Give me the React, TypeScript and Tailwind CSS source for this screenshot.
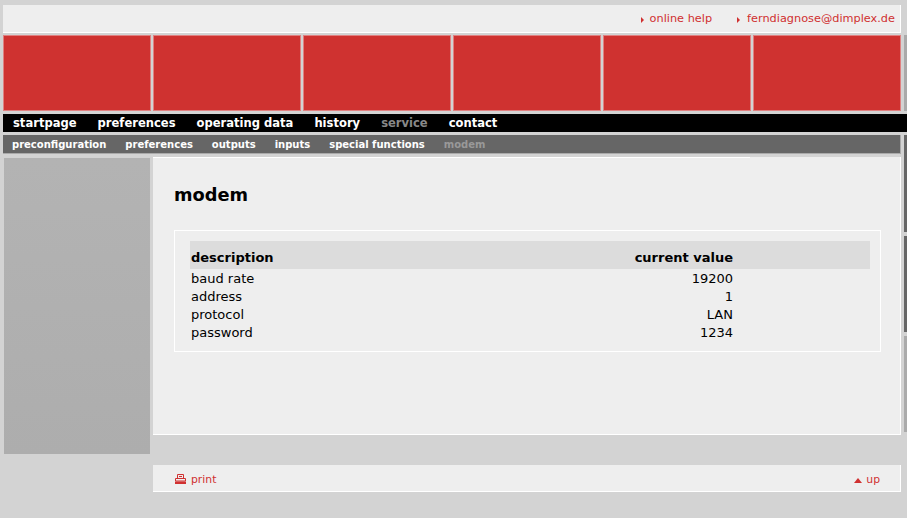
const tiles = [1, 2, 3, 4, 5, 6];

const mainNav = [
  { label: 'startpage' },
  { label: 'preferences' },
  { label: 'operating data' },
  { label: 'history' },
  { label: 'service', muted: true },
  { label: 'contact' },
];

const subNav = [
  { label: 'preconfiguration' },
  { label: 'preferences' },
  { label: 'outputs' },
  { label: 'inputs' },
  { label: 'special functions' },
  { label: 'modem', muted: true },
];

const rows = [
  ['baud rate', '19200'],
  ['address', '1'],
  ['protocol', 'LAN'],
  ['password', '1234'],
];

function ArrowRight({ gap }: { gap: string }) {
  return (
    <svg width="3" height="6" viewBox="0 0 3 6" className={gap}>
      <path d="M0 0 L3 3 L0 6 Z" fill="#d03030" />
    </svg>
  );
}

function PrintIcon() {
  return (
    <svg width="11" height="10" viewBox="0 0 11 10" className="mr-[5px] mb-[2px]">
      <path d="M2.5 4 V0.5 H8.5 V4 M4 2.5 H7" fill="none" stroke="#d03030" />
      <path d="M0.5 4.5 H10.5 V7 H0.5 Z" fill="none" stroke="#d03030" />
      <rect x="0" y="7.5" width="11" height="2.5" fill="#d03030" />
    </svg>
  );
}

export default function App() {
  return (
    <div className="h-[518px] w-[907px] overflow-hidden bg-[#d3d3d3] pl-[3px] pt-[5px] font-['DejaVu_Sans',sans-serif] text-[13px] text-black">
      {/* Top links */}
      <div className="flex h-[28px] w-[898px] items-center justify-end border-b border-r border-white bg-[#eeeeee] pr-[5px] pt-[2px] text-[11.3px] text-[#d03030]">
        <a className="flex items-center">
          <ArrowRight gap="mr-[6px]" />
          online help
        </a>
        <a className="ml-[25px] flex items-center">
          <ArrowRight gap="mr-[7px]" />
          ferndiagnose@dimplex.de
        </a>
      </div>

      {/* Red tiles */}
      <div className="mt-[2px] flex gap-[2px]">
        {tiles.map((t) => (
          <div key={t} className="h-[76px] w-[148px] shrink-0 border border-[#e08080] bg-[#cf3230]" />
        ))}
        <div className="ml-px h-[76px] w-[148px] shrink-0 bg-[#aaaaaa]" />
      </div>

      {/* Main nav */}
      <div className="mt-[3px] flex h-[18px] w-[904px] items-center bg-black pl-[10px] pt-[2px] text-[11.55px] font-bold text-white">
        {mainNav.map((item) => (
          <a key={item.label} className={`mr-[21px] ${item.muted ? 'text-[#888888]' : ''}`}>
            {item.label}
          </a>
        ))}
      </div>

      <div className="mt-[3px] flex">
        <div className="w-[898px] shrink-0">
          {/* Sub nav */}
          <div className="flex h-[19px] items-center border-b border-r border-[#aaaaaa] bg-[#666666] pl-[9px] pt-[1px] text-[10px] font-bold text-white">
            {subNav.map((item) => (
              <a key={item.label} className={`mr-[19px] ${item.muted ? 'text-[#999999]' : ''}`}>
                {item.label}
              </a>
            ))}
          </div>

          <div className="mt-[3px] flex">
            {/* Side column */}
            <div className="ml-px mt-px h-[296px] w-[146px] bg-gradient-to-b from-[#b3b3b3] to-[#adadad]" />

            <div className="ml-[3px] w-[748px]">
              {/* Content */}
              <div className="h-[278px] border-b border-r border-white bg-[#eeeeee] pr-[19px]">
                <div className="h-px w-[597px] bg-white" />
                <div className="pl-[21px] pt-[25px]">
                  <h1 className="text-[17.8px] font-bold leading-[24px]">modem</h1>
                  <div className="mt-[23px] h-[122px] border border-white pl-[15px] pr-[10px] pt-[10px]">
                    <table className="w-full table-fixed border-collapse">
                      <thead>
                        <tr className="h-[28px] bg-[#dcdcdc] font-bold">
                          <th className="w-[443px] pl-px pt-[6px] text-left">description</th>
                          <th className="w-[100px] whitespace-nowrap pt-[6px] text-right">current value</th>
                          <th />
                        </tr>
                      </thead>
                      <tbody>
                        {rows.map(([name, value]) => (
                          <tr key={name} className="h-[18px] leading-[18px]">
                            <td className="pl-px pt-px leading-[17px]">{name}</td>
                            <td className="pt-px text-right leading-[17px]">{value}</td>
                            <td />
                          </tr>
                        ))}
                      </tbody>
                    </table>
                  </div>
                </div>
              </div>

              {/* Footer */}
              <div className="mt-[30px] flex h-[27px] items-center justify-between border-b border-r border-white bg-[#eeeeee] pl-[22px] pr-[20px] pt-[4px] text-[10.8px] text-[#d03030]">
                <a className="flex items-center">
                  <PrintIcon />
                  print
                </a>
                <a className="flex items-center">
                  <svg width="8" height="5" viewBox="0 0 8 5" className="mr-[4px]">
                    <path d="M4 0 L8 5 H0 Z" fill="#d03030" />
                  </svg>
                  up
                </a>
              </div>
            </div>
          </div>
        </div>

        {/* Next column, cut off by the window */}
        <div className="ml-[3px] flex w-[148px] shrink-0 flex-col gap-[4px]">
          <div className="h-[97px] bg-[#666666]" />
          <div className="h-[96px] bg-[#666666]" />
          <div className="h-[96px] bg-[#aaaaaa]" />
        </div>
      </div>
    </div>
  );
}
